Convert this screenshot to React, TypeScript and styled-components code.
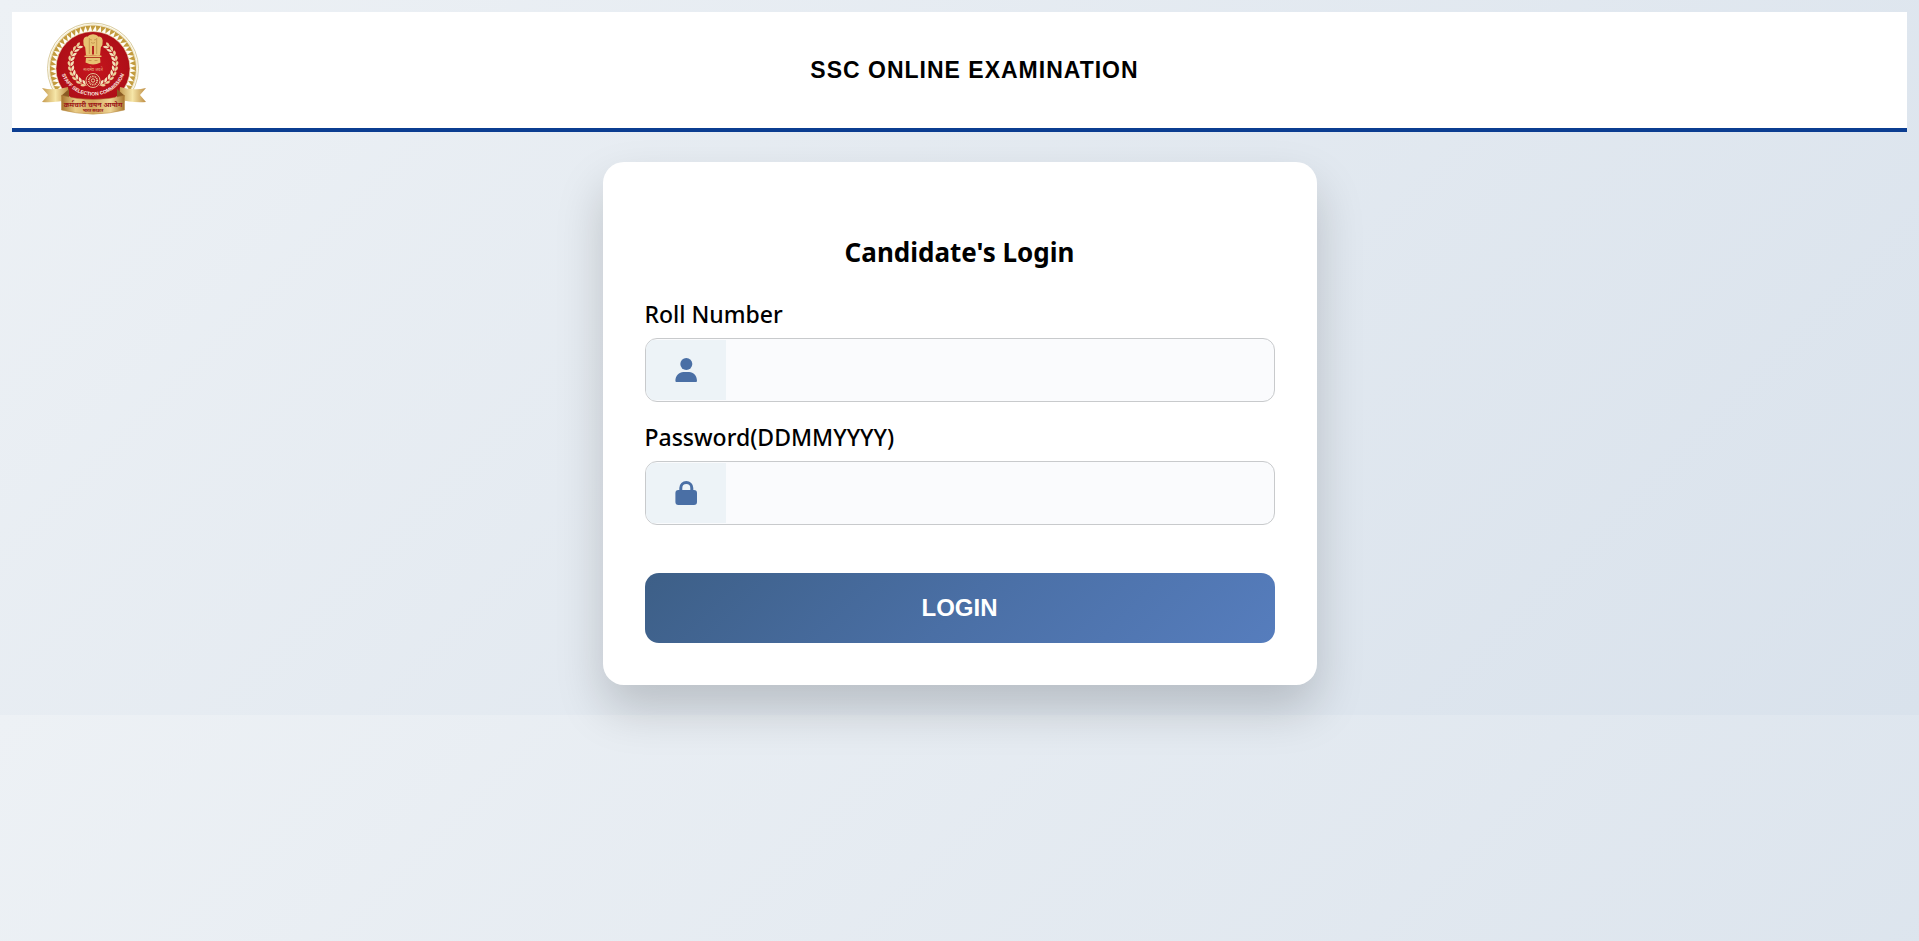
import React from "react";
import styled, { createGlobalStyle } from "styled-components";

const GlobalStyle = createGlobalStyle`
  *, *::before, *::after { box-sizing: border-box; }
  body {
    margin: 0;
    color: #000;
    font-family: "Segoe UI", "Noto Sans", "Open Sans", sans-serif;
  }
`;

const pageGradient = "linear-gradient(135deg, #edf1f5, #d9e2ec)";

const Shell = styled.div`
  display: flex;
  flex-direction: column;
  min-height: 100vh;
`;

const Page = styled.div`
  position: relative;
  z-index: 1;
  display: flex;
  flex-direction: column;
  gap: 30px;
  padding: 12px 12px 30px;
  background: ${pageGradient};
`;

/* The gradient starts over below the content, down to the window's edge. */
const Backdrop = styled.div`
  flex: 1;
  background: ${pageGradient} 0 0 / 100% 715px;
`;

const Header = styled.header`
  display: flex;
  align-items: center;
  height: 120px;
  padding: 0 104px 0 30px;
  background: #fff;
  border-bottom: 4px solid #0b3d91;
`;

const Emblem = styled.svg`
  display: block;
  flex: none;
  width: 104px;
  height: 98px;
  padding-bottom: 4px;
`;

const SiteTitle = styled.h1`
  flex: 1;
  margin: 0;
  font: 700 23px/28px Arial, "Liberation Sans", sans-serif;
  letter-spacing: 1px;
  text-align: center;
`;

const Card = styled.main`
  width: 100%;
  max-width: 714px;
  margin: 0 auto;
  padding: 42px;
  background: #fff;
  border-radius: 21px;
  box-shadow: 0 24px 48px rgba(0, 0, 0, 0.18);
`;

const CardTitle = styled.h2`
  margin: 29px 0 27px;
  font-size: 26px;
  line-height: 38px;
  font-weight: 700;
  text-align: center;
`;

const Form = styled.form`
  display: flex;
  flex-direction: column;
`;

const Field = styled.div`
  margin-bottom: 19px;
`;

const Label = styled.label`
  display: block;
  margin-bottom: 8px;
  font-size: 23px;
  line-height: 32px;
  font-weight: 500;
`;

const InputGroup = styled.div`
  display: flex;
  height: 64px;
  padding: 1px 0;
  overflow: hidden;
  background: #fafbfd;
  border: 1px solid #c8cacc;
  border-radius: 12px;
`;

const IconCell = styled.span`
  display: flex;
  flex: none;
  align-items: center;
  justify-content: center;
  width: 80px;
  background: #edf3f7;
  color: #4a6fa5;
`;

const TextInput = styled.input`
  flex: 1;
  min-width: 0;
  padding: 0 20px;
  border: 0;
  outline: 0;
  background: transparent;
  font: inherit;
  font-size: 23px;
`;

const LoginButton = styled.button`
  height: 70px;
  margin-top: 29px;
  border: 0;
  border-radius: 14px;
  background: linear-gradient(135deg, #3d5f87, #4a6fa5 50%, #567dbd);
  color: #fff;
  font: 700 24px/28px Arial, "Liberation Sans", sans-serif;
  cursor: pointer;
`;

const UserIcon = () => (
  <svg width="22" height="24" viewBox="0 0 22 24" fill="currentColor" aria-hidden="true">
    <circle cx="11.300" cy="6" r="6" />
    <path d="M.4 23C.4 17.500 4.200 14 8.400 14h5.800c4.200 0 7.800 3.500 7.800 9q0 1-1 1H1.400q-1 0-1-1Z" />
  </svg>
);

const LockIcon = () => (
  <svg width="22" height="24" viewBox="0 0 22 24" fill="currentColor" aria-hidden="true">
    <path
      fillRule="evenodd"
      d="M4.300 9V7a7 7 0 0 1 14 0v2h.7a3 3 0 0 1 3 3v9a3 3 0 0 1-3 3H3.400a3 3 0 0 1-3-3v-9a3 3 0 0 1 3-3Zm3 0h8V7a4 4 0 0 0-8 0Z"
    />
  </svg>
);

const CX = 51;
const CY = 47.5;
const teeth = Array.from({ length: 52 }, (_, i) => (i * 360) / 52);
const leaves = Array.from({ length: 10 }, (_, i) => 18 + i * 13);

const Wreath = () => (
  <g>
    <path d="M47 65C28 62 21 42 35 24" fill="none" stroke="#e8c98a" strokeWidth="0.7" />
    {leaves.map((a) => (
      <g key={a} transform={`rotate(${a} ${CX} 42.500)`}>
        <path d="M51 65q-4 .500-5-3.800q4.400 0 5 3.800Z" fill="#f4e3bb" />
        <path d="M51 65.500q-2.500 3.500-5.600 1.300q1.600-2.800 5.600-1.300Z" fill="#ecd19a" />
      </g>
    ))}
  </g>
);

const SscEmblem = () => (
  <Emblem viewBox="0 0 104 94" role="img" aria-label="Staff Selection Commission">
    <defs>
      <linearGradient id="ribbon" x1="0" x2="1" y1="0" y2="0">
        <stop offset="0" stopColor="#a9762f" />
        <stop offset="0.22" stopColor="#e9cb85" />
        <stop offset="0.5" stopColor="#d3a75c" />
        <stop offset="0.78" stopColor="#efd595" />
        <stop offset="1" stopColor="#a9762f" />
      </linearGradient>
      <linearGradient id="tail" x1="0" x2="1" y1="0" y2="0">
        <stop offset="0" stopColor="#c59a4e" />
        <stop offset="0.5" stopColor="#f6e6a8" />
        <stop offset="1" stopColor="#bd8c42" />
      </linearGradient>
      <radialGradient id="disc">
        <stop offset="0" stopColor="#c5151d" />
        <stop offset="1" stopColor="#ae0f17" />
      </radialGradient>
      <path id="motto" d="M16.500 40C18.500 62 33 74.500 51 74.500S83.500 62 85.500 40" />
    </defs>

    <circle cx={CX} cy={CY} r="45.500" fill="#fffdf5" stroke="#cfbf88" strokeWidth="0.8" />
    <circle cx={CX} cy={CY} r="43.800" fill="none" stroke="#e3d5a4" strokeWidth="0.6" />
    {teeth.map((a) => (
      <path
        key={a}
        d="M48.500 4.500h5.300l-3.600 6Z"
        fill="#c39c3f"
        transform={`rotate(${a} ${CX} ${CY})`}
      />
    ))}
    <circle cx={CX} cy={CY} r="37" fill="url(#disc)" stroke="#e9d9a5" strokeWidth="0.6" />

    <Wreath />
    <g transform="translate(102 0) scale(-1 1)">
      <Wreath />
    </g>

    <g fill="#e8c272">
      <path d="M45.500 16q1-2 3-2.200q2.500-1 5 0q2 .2 3 2.200l1 5.500-1.500 8 1 5H45l1-5-1.500-8Z" />
      <path d="M41.300 19.500q.2-3 2.500-3.800q2.300-.4 3 .8l1 5-1.300 6 1 7h-3.500l-.8-8q-2.300-2.500-1.900-7Z" />
      <path d="M60.700 19.500q-.2-3-2.500-3.800q-2.300-.4-3 .8l-1 5 1.300 6-1 7h3.500l.8-8q2.300-2.500 1.900-7Z" />
      <rect x="42.500" y="34.500" width="17" height="1.600" rx="0.500" />
      <path d="M44 37h14l.5 4.500q-7.500 4-15 0Z" />
    </g>
    <path d="M50 25h2v8.500h-2Z" fill="#b5261e" />
    <g fill="none" stroke="#a86f2c" strokeWidth="0.5">
      <path d="M48 18.500l2 .5m4-.5l-2 .5M49 21.500q2 1.500 4 0M47.300 17v16M54.700 17v16" />
      <path d="M44 36.500h14M46.500 39.500h3m3 0h3" />
    </g>
    <text x="51" y="49.500" textAnchor="middle" fontSize="4" fill="#e6b98c" fontFamily="Noto Sans, sans-serif">
      सत्यमेव जयते
    </text>

    <circle cx="51" cy="59.500" r="8" fill="#b41219" />
    <g fill="none" stroke="#edd3a0">
      <circle cx="51" cy="59.500" r="7" strokeWidth="0.9" />
      <circle cx="51" cy="59.500" r="4.200" strokeWidth="1.800" strokeDasharray="0.9 0.75" />
      <circle cx="51" cy="59.500" r="1.700" strokeWidth="1" />
    </g>
    <text fontSize="5" fontWeight="700" fill="#fff3e8" fontFamily="Liberation Sans, Arial, sans-serif" textAnchor="middle">
      <textPath href="#motto" startOffset="50%">STAFF SELECTION COMMISSION</textPath>
    </text>

    <path d="M0 67q12 3 26-1l1 12q-12 4-27 3l6-7Z" fill="url(#tail)" />
    <path d="M104 67q-12 3-26-1l-1 12q12 4 27 3l-6-7Z" fill="url(#tail)" />
    <path d="M19 75l8-7v11Z" fill="#8a5a22" />
    <path d="M83 75l-8-7v11Z" fill="#8a5a22" />
    <path d="M19.500 74.500q31.500 8 63 0v14.500q-31.500 8-63 0Z" fill="url(#ribbon)" stroke="#b98a41" strokeWidth="0.5" />
    <text x="51" y="86" textAnchor="middle" fontSize="7" fontWeight="700" fill="#9a1518" fontFamily="Noto Sans, sans-serif">
      कर्मचारी चयन आयोग
    </text>
    <text x="51" y="91" textAnchor="middle" fontSize="4" fontWeight="700" fill="#9a1518" fontFamily="Noto Sans, sans-serif">
      भारत सरकार
    </text>
  </Emblem>
);

export default function App() {
  return (
    <>
      <GlobalStyle />
      <Shell>
        <Page>
          <Header>
            <SscEmblem />
            <SiteTitle>SSC ONLINE EXAMINATION</SiteTitle>
          </Header>
          <Card>
            <CardTitle>Candidate's Login</CardTitle>
            <Form onSubmit={(e) => e.preventDefault()}>
              <Field>
                <Label htmlFor="roll">Roll Number</Label>
                <InputGroup>
                  <IconCell>
                    <UserIcon />
                  </IconCell>
                  <TextInput id="roll" type="text" />
                </InputGroup>
              </Field>
              <Field>
                <Label htmlFor="password">Password(DDMMYYYY)</Label>
                <InputGroup>
                  <IconCell>
                    <LockIcon />
                  </IconCell>
                  <TextInput id="password" type="password" />
                </InputGroup>
              </Field>
              <LoginButton type="submit">LOGIN</LoginButton>
            </Form>
          </Card>
        </Page>
        <Backdrop />
      </Shell>
    </>
  );
}
